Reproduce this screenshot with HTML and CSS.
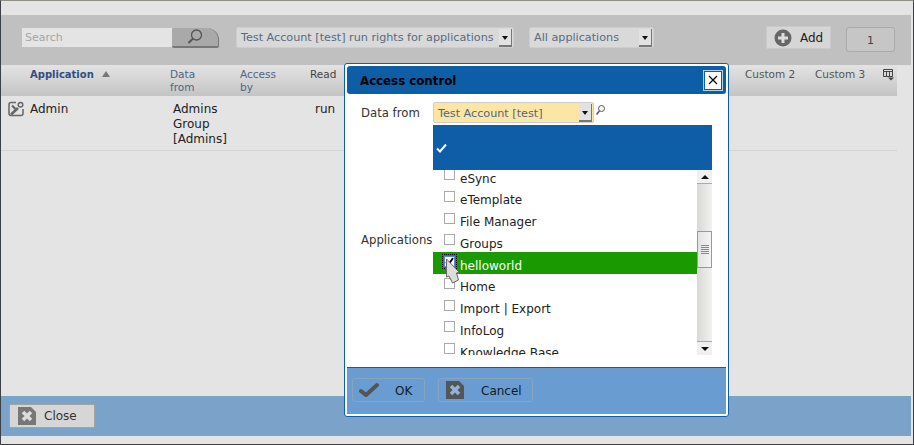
FILE: index.html
```html
<!DOCTYPE html>
<html lang="en">
<head>
  <meta charset="UTF-8" />
  <title>Access control</title>
  <link rel="stylesheet" href="styles.css">
</head>
<body>
  <div class="page">
    <div class="top-strip"></div>

    <div class="toolbar">
      <div class="search">
        <input class="search-input" type="text" placeholder="Search" />
        <div class="search-btn">
          <svg width="18" height="18" viewBox="0 0 18 18"><circle cx="10.5" cy="7" r="5" fill="none" stroke="#555" stroke-width="1.3"/><path d="M7 10.5L2.5 15" stroke="#555" stroke-width="2"/></svg>
        </div>
      </div>
      <div class="select select-filter">
        <span>Test Account [test] run rights for applications</span>
        <i class="arrow"></i>
      </div>
      <div class="select select-apps">
        <span>All applications</span>
        <i class="arrow"></i>
      </div>
      <div class="add-btn">
        <svg width="18" height="18" viewBox="0 0 18 18"><circle cx="9" cy="9" r="8.5" fill="#666"/><path d="M9 4v10M4 9h10" stroke="#ddd" stroke-width="3"/></svg>
        <span>Add</span>
      </div>
      <div class="count">1</div>
    </div>

    <div class="table-head">
      <div class="col col-app"><b>Application</b><i class="sort"></i></div>
      <div class="col col-data">Data<br>from</div>
      <div class="col col-access">Access<br>by</div>
      <div class="col col-read">Read</div>
      <div class="col col-custom">Custom 2</div>
      <div class="col col-custom">Custom 3</div>
      <div class="col col-pick">
        <svg width="11" height="12" viewBox="0 0 11 12"><path d="M.5 .5h9v7h-9zM.5 2.500h9M3.500 2.500v5M6.500 2.500v5" fill="none" stroke="#444"/><path d="M5 8.500h6l-3 3z" fill="#444"/></svg>
      </div>
    </div>

    <div class="table-row">
      <div class="row-icon">
        <svg width="17" height="17" viewBox="0 0 17 17"><path d="M8 1.500H3Q1 1.500 1 3.500v9q0 2 2 2h10q2 0 2-2V8" fill="none" stroke="#666" stroke-width="1.500"/><circle cx="12.500" cy="3.800" r="2.300" fill="none" stroke="#666" stroke-width="1.500"/><path d="M10 7L3 13.500" stroke="#666" stroke-width="2.600"/><path d="M4 4.500l3.500 3.500" stroke="#666" stroke-width="2.200"/></svg>
      </div>
      <div class="cell-app">Admin</div>
      <div class="cell-data">Admins<br>Group<br>[Admins]</div>
      <div class="cell-read">run</div>
    </div>

    <div class="spacer"></div>

    <div class="footer">
      <div class="close-btn">
        <svg width="18" height="18" viewBox="0 0 18 18"><path d="M0 0h13l5 5v13H0z" fill="#777"/><path d="M5 5l8 8M13 5l-8 8" stroke="#ddd" stroke-width="3.500"/></svg>
        <span>Close</span>
      </div>
    </div>
    <div class="bottom-strip"></div>
  </div>

  <div class="dialog">
    <div class="dialog-title">
      <span class="dialog-name">Access control</span>
      <div class="dialog-close">
        <svg width="10" height="10" viewBox="0 0 10 10"><path d="M1 1l8 8M9 1l-8 8" stroke="#000" stroke-width="1.200"/></svg>
      </div>
    </div>

    <div class="dialog-body">
      <div class="form-row">
        <label class="form-label">Data from</label>
        <div class="select select-account">
          <span>Test Account [test]</span>
          <i class="arrow"></i>
        </div>
        <svg class="mini-search" width="11" height="12" viewBox="0 0 11 12"><circle cx="6.500" cy="4.500" r="3" fill="none" stroke="#555"/><path d="M4.500 7L1.500 10.500" stroke="#555" stroke-width="1.500"/></svg>
      </div>

      <div class="form-row form-row-apps">
        <label class="form-label label-apps">Applications</label>
        <div class="picker">
          <div class="picker-head">
            <svg width="11" height="10" viewBox="0 0 11 10"><path d="M1 5.500l3 3 6-7" fill="none" stroke="#fff" stroke-width="2"/></svg>
          </div>
          <div class="picker-main">
            <div class="picker-list">
              <div class="app"><i class="box"></i>eSync</div>
              <div class="app"><i class="box"></i>eTemplate</div>
              <div class="app"><i class="box"></i>File Manager</div>
              <div class="app"><i class="box"></i>Groups</div>
              <div class="app app-on"><i class="box box-on"><svg width="11" height="11" viewBox="0 0 11 11"><path d="M2 6l2.500 2.500L9 2" fill="none" stroke="#000" stroke-width="1.800"/></svg></i>helloworld</div>
              <div class="app"><i class="box"></i>Home</div>
              <div class="app"><i class="box"></i>Import | Export</div>
              <div class="app"><i class="box"></i>InfoLog</div>
              <div class="app"><i class="box"></i>Knowledge Base</div>
            </div>
            <div class="scrollbar">
              <div class="scroll-btn"><i class="tri-up"></i></div>
              <div class="scroll-track">
                <div class="scroll-thumb"><i></i><i></i><i></i><i></i><i></i></div>
              </div>
              <div class="scroll-btn scroll-btn-down"><i class="tri-down"></i></div>
            </div>
          </div>
        </div>
      </div>
    </div>

    <div class="dialog-foot">
      <div class="dlg-btn btn-ok">
        <svg width="20" height="16" viewBox="0 0 20 16"><path d="M2 9l5 4 11-10" fill="none" stroke="#555" stroke-width="4" stroke-linecap="round" stroke-linejoin="round"/></svg>
        <span>OK</span>
      </div>
      <div class="dlg-btn btn-cancel">
        <svg width="18" height="18" viewBox="0 0 18 18"><path d="M0 0h13l5 5v13H0z" fill="#555"/><path d="M5 5l8 8M13 5l-8 8" stroke="#8fb4da" stroke-width="3.500"/></svg>
        <span>Cancel</span>
      </div>
    </div>
  </div>

  <svg class="cursor" width="16" height="26" viewBox="0 0 16 26"><path d="M1.500 1l12.500 13-2.500 1 2 7-6 3-3.500-7-2.500 1z" fill="#ddd" stroke="#666"/></svg>
</body>
</html>
```

FILE: styles.css
```css
* {
  box-sizing: border-box;
}

html, body {
  margin: 0;
  height: 100%;
  overflow: hidden;
}

body {
  font-family: "DejaVu Sans", sans-serif;
  font-size: 12px;
  color: #222;
  background-color: #e4e4e4;
}

.page {
  display: flex;
  flex-direction: column;
  height: 445px;
  border-top: 1px solid #8f8f86;
  border-left: 1px solid #3c4148;
  border-right: 1px solid #3c4148;
  border-bottom: 1px solid #3c4148;
}

.top-strip {
  height: 14px;
}

.toolbar {
  display: flex;
  align-items: flex-start;
  height: 50px;
  margin-right: 2px;
  padding: 12px 0 0 21px;
  background-color: #c0c0c0;
}

.search {
  display: flex;
  margin: 1px 0 0;
}

.search-input {
  width: 150px;
  height: 19px;
  padding: 0 3px;
  border: 0;
  font: 11px "DejaVu Sans", sans-serif;
  background-color: #e4e4e4;
}

.search-input::placeholder {
  color: #a6a6a6;
}

.search-btn {
  display: flex;
  justify-content: center;
  align-items: center;
  width: 47px;
  height: 20px;
  background-color: #a9a9a9;
  border-bottom: 2px solid #777;
  border-right: 1px solid #777;
  border-radius: 2px 12px 2px 2px;
}

.select {
  display: flex;
  align-items: center;
  justify-content: space-between;
  height: 21px;
  padding: 0 1px 0 4px;
  font-size: 11.200px;
  color: #566b85;
  background-color: #d9d9d9;
  border: 1px solid #cdcdcd;
  border-radius: 2px;
}

.select-filter {
  width: 278px;
  margin-left: 17px;
}

.select-apps {
  width: 125px;
  margin-left: 15px;
}

.arrow {
  position: relative;
  width: 13px;
  height: 18px;
  background-color: #e2e2e2;
  border-right: 1px solid #777;
  border-bottom: 2px solid #777;
}

.arrow::after {
  content: "";
  position: absolute;
  top: 7px;
  left: 3px;
  border: 3.500px solid transparent;
  border-top: 4px solid #111;
  border-bottom: 0;
}

.add-btn {
  display: flex;
  align-items: center;
  gap: 8px;
  width: 65px;
  height: 23px;
  margin: -1px 0 0 112px;
  padding-left: 7px;
  font-size: 12px;
  color: #222;
  background-color: #d6d6d6;
  border: 1px solid #cacaca;
}

.count {
  width: 49px;
  height: 25px;
  margin-left: 15px;
  font-size: 11px;
  line-height: 26px;
  text-align: center;
  color: #444;
  background-color: #c6c6c6;
  border: 1px solid #aaa;
  border-radius: 3px;
}

.table-head {
  display: flex;
  width: 896px;
  height: 31px;
  padding-top: 3px;
  font-size: 10.500px;
  line-height: 13px;
  color: #4d6684;
  background: linear-gradient(#e3e3e3, #c4c4c4);
}

.col-app {
  display: flex;
  width: 169px;
  padding-left: 29px;
  font-size: 10px;
  color: #2f4f80;
}

.sort {
  width: 0;
  height: 0;
  margin: 3px 0 0 8px;
  border: 4px solid transparent;
  border-top: 0;
  border-bottom: 6px solid #777;
}

.col-data {
  width: 70px;
}

.col-access {
  width: 70px;
}

.col-read {
  width: 435px;
  color: #444;
}

.col-custom {
  width: 70px;
  color: #555;
}

.col-pick {
  margin-left: -2px;
  padding-top: 1px;
}

.table-row {
  display: flex;
  width: 896px;
  height: 55px;
  padding-top: 6px;
  line-height: 15px;
  border-bottom: 1px solid #d3d3d3;
}

.row-icon {
  width: 29px;
  padding-left: 7px;
  margin-top: -1px;
}

.cell-app {
  width: 143px;
}

.cell-data {
  width: 142px;
}

.spacer {
  flex: 1;
}

.footer {
  height: 40px;
  margin-right: 2px;
  padding: 8px 0 0 8px;
  background-color: #7ba2c9;
}

.close-btn {
  display: flex;
  align-items: center;
  gap: 8px;
  width: 86px;
  height: 24px;
  padding-left: 8px;
  color: #333;
  background-color: #d6d6d6;
  border: 1px solid #a3a3a3;
}

.bottom-strip {
  height: 8px;
}

/* dialog */
.dialog {
  position: absolute;
  top: 63px;
  left: 344px;
  display: flex;
  flex-direction: column;
  width: 385px;
  height: 354px;
  padding: 2px;
  background-color: #fff;
  border: 1px solid #0f5ea8;
  border-radius: 3px;
}

.dialog-title {
  display: flex;
  align-items: center;
  justify-content: space-between;
  height: 28px;
  padding: 0 4px 0 13px;
  font-size: 11.800px;
  font-weight: bold;
  color: #000;
  background-color: #0e5da7;
  border-radius: 3px;
}

.dialog-name {
  padding-top: 2px;
}

.dialog-close {
  display: flex;
  align-items: center;
  justify-content: center;
  width: 18px;
  height: 19px;
  background-color: #fff;
  border: 1px solid #0e5da7;
  outline: 1px solid #b9cfe6;
}

.dialog-body {
  flex: 1;
  padding: 8px 0 0 14px;
}

.form-row {
  display: flex;
  align-items: center;
}

.form-row-apps {
  align-items: flex-start;
  margin-top: 2px;
}

.form-label {
  width: 72px;
  padding-top: 1px;
  font-size: 11.700px;
  color: #333;
}

.label-apps {
  margin-top: 107px;
}

.select-account {
  width: 161px;
  padding-top: 1px;
  color: #4d6684;
  background-color: #fde6a3;
}

.mini-search {
  margin: -6px 0 0 1px;
}

.picker {
  width: 279px;
}

.picker-head {
  display: flex;
  align-items: center;
  height: 45px;
  padding-left: 3px;
  background-color: #0e5da7;
}

.picker-main {
  display: flex;
  height: 185px;
}

.picker-list {
  flex: 1;
  overflow: hidden;
}

.app {
  position: relative;
  display: flex;
  height: 21.750px;
  padding: 5.500px 0 0 27px;
  line-height: 17px;
}

.app:first-child {
  margin-top: -5px;
}

.box {
  position: absolute;
  top: 4px;
  left: 11px;
  width: 11px;
  height: 11px;
  background-color: #fff;
  border: 1px solid #aaa;
}

.app-on {
  color: #fff;
  background-color: #1a9a00;
}

.box-on {
  border-color: #5a8ad0;
  outline: 1px dotted #000;
  outline-offset: 1px;
}

.box-on svg {
  display: block;
  margin: -1px;
}

.scrollbar {
  display: flex;
  flex-direction: column;
  width: 15px;
}

.scroll-btn {
  display: flex;
  align-items: center;
  justify-content: center;
  height: 14px;
  background-color: #f0f0f0;
  border-bottom: 1px solid #aaa;
}

.scroll-btn-down {
  border-top: 1px solid #aaa;
  border-bottom: 0;
}

.scroll-track {
  flex: 1;
  padding-top: 47px;
  background: linear-gradient(90deg, #d8d8d6, #f2f2f0);
}

.scroll-thumb {
  display: flex;
  flex-direction: column;
  align-items: center;
  justify-content: center;
  gap: 1px;
  height: 37px;
  background: linear-gradient(90deg, #e2e2e2, #f4f4f4);
  border: 1px solid #999;
}

.scroll-thumb i {
  width: 8px;
  height: 1px;
  background-color: #888;
}

.tri-up {
  border: 4px solid transparent;
  border-top: 0;
  border-bottom: 4px solid #111;
}

.tri-down {
  border: 4px solid transparent;
  border-bottom: 0;
  border-top: 4px solid #111;
}

.dialog-foot {
  display: flex;
  gap: 13px;
  height: 47px;
  padding: 10px 0 0 5px;
  background-color: #699dd1;
  border-top: 1px solid #0e5da7;
}

.dlg-btn {
  display: flex;
  align-items: center;
  height: 24px;
  color: #0d1b2a;
  border: 1px solid #8aa4bf;
  border-radius: 3px;
}

.dlg-btn span {
  padding-top: 2px;
}

.btn-ok {
  width: 73px;
  padding-left: 6px;
  gap: 16px;
}

.btn-cancel {
  width: 95px;
  padding-left: 7px;
  gap: 17px;
}

.cursor {
  position: absolute;
  top: 258px;
  left: 445px;
}
```
